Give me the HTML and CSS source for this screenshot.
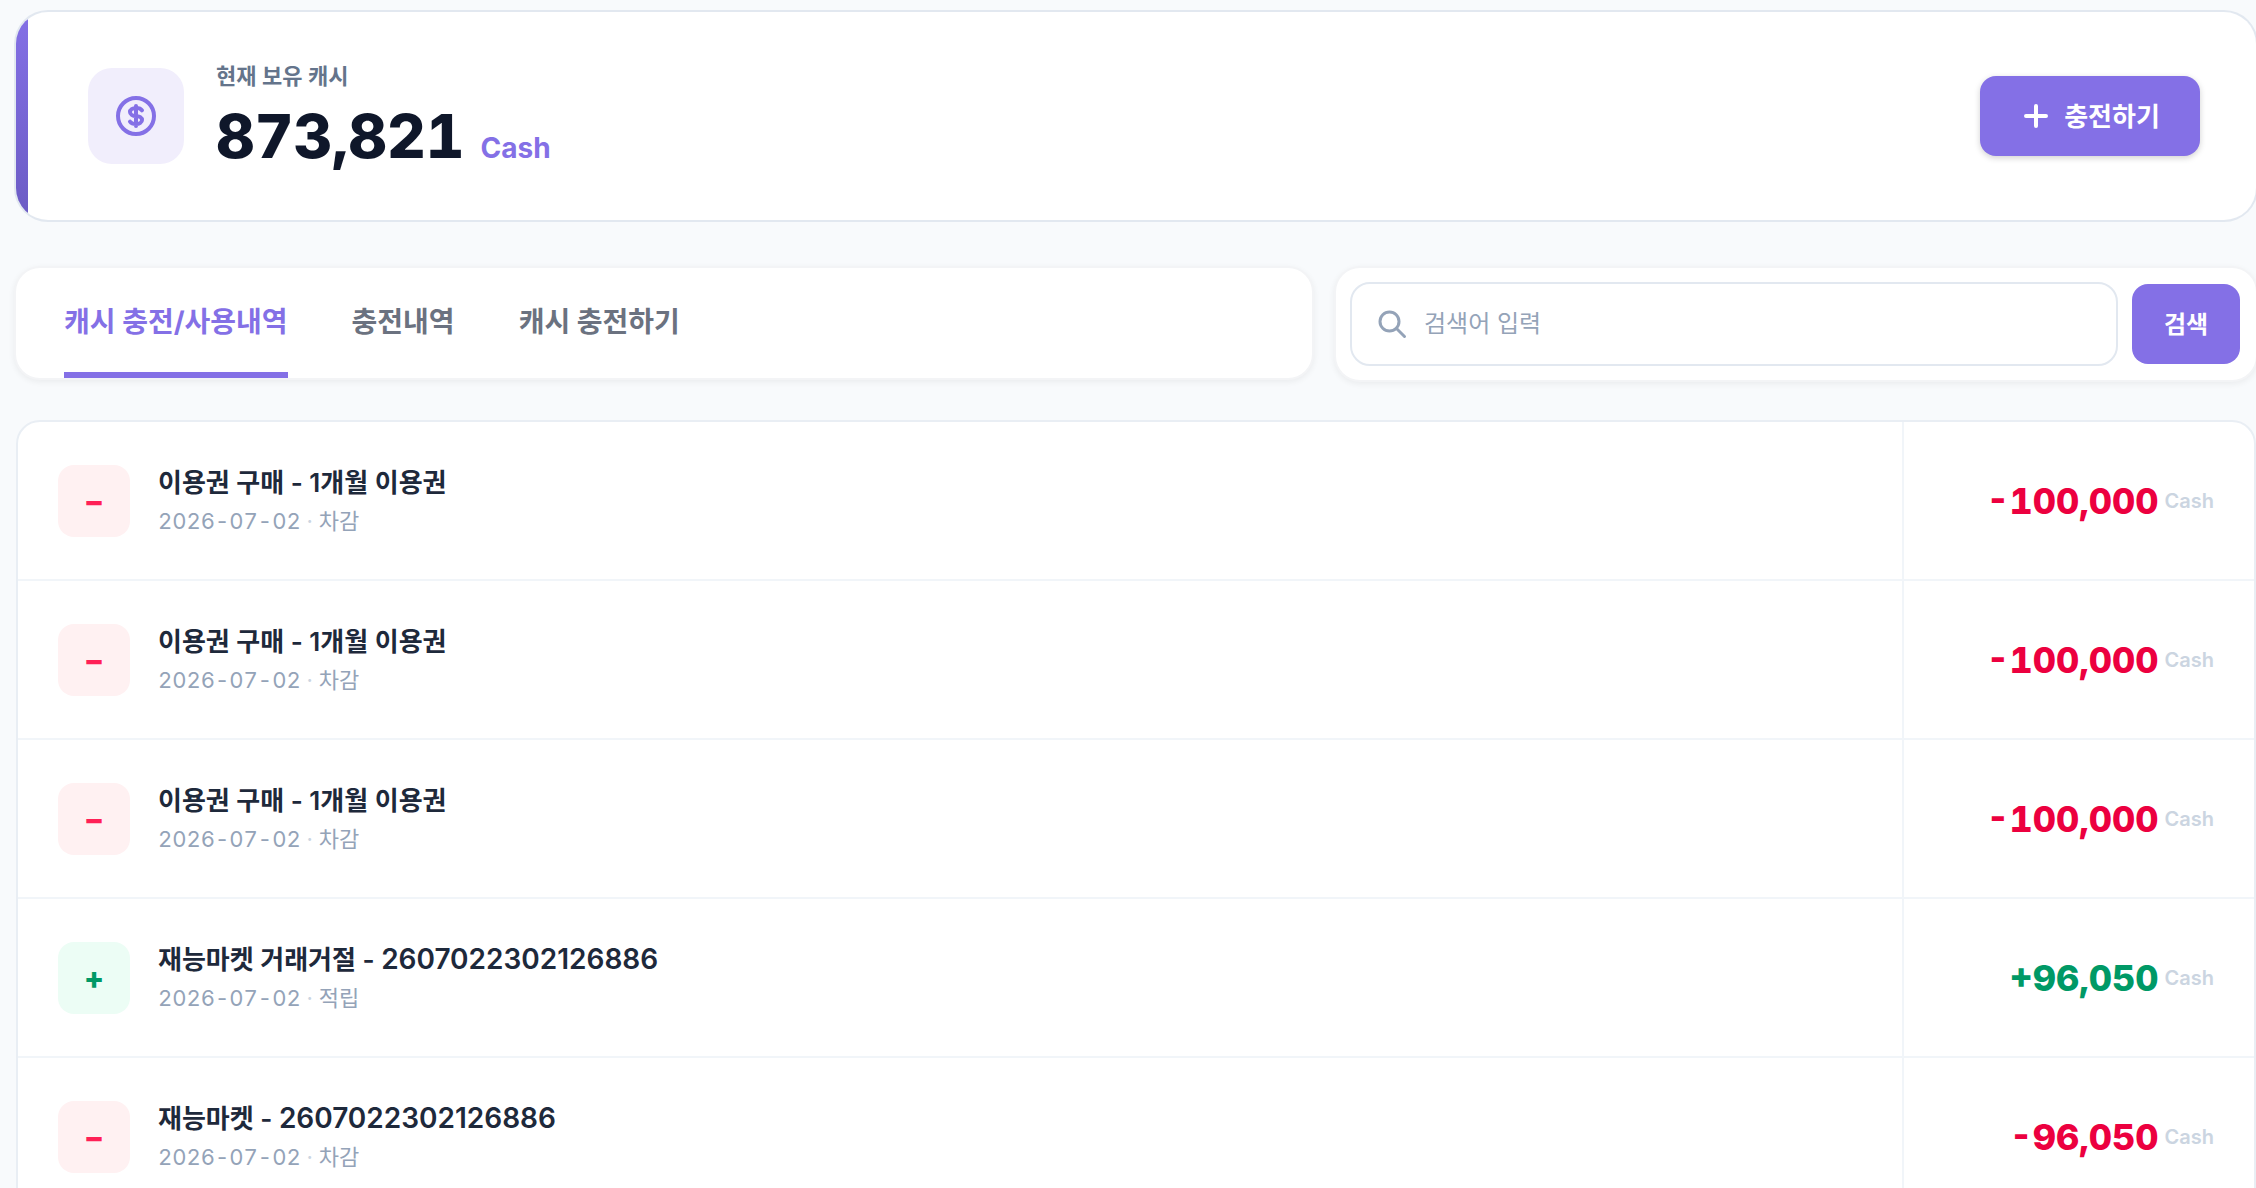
FILE: index.html
```html
<!DOCTYPE html>
<html lang="ko">
<head>
<meta charset="utf-8">
<meta name="viewport" content="width=device-width, initial-scale=1">
<title>캐시 충전/사용내역</title>
<link rel="stylesheet" href="styles.css">
</head>
<body>
<main class="page">
  <section class="balance">
    <div class="balance-icon">
      <svg width="48" height="48" viewBox="0 0 24 24" fill="none" stroke="currentColor" stroke-width="2" stroke-linecap="round" stroke-linejoin="round" aria-hidden="true"><circle cx="12" cy="12" r="9"/><path d="M15 9.200c-.5-.8-1.600-1.200-3-1.200-1.700 0-3 .9-3 2s1.300 2 3 2 3 .9 3 2-1.300 2-3 2c-1.400 0-2.500-.5-3-1.200M12 7v10"/></svg>
    </div>
    <div class="balance-info">
      <p class="balance-label">현재 보유 캐시</p>
      <p class="balance-value"><strong class="balance-number">873,821</strong><span class="balance-unit">Cash</span></p>
    </div>
    <button class="charge" type="button">
      <svg width="32" height="32" viewBox="0 0 32 32" fill="none" stroke="currentColor" stroke-width="4" stroke-linecap="round" aria-hidden="true"><path d="M16 6v20M6 16h20"/></svg>
      <span class="button-text">충전하기</span>
    </button>
  </section>

  <div class="toolbar">
    <nav class="tabs">
      <a class="tab tab-active" href="#history" aria-current="page">캐시 충전/사용내역</a>
      <a class="tab" href="#charges">충전내역</a>
      <a class="tab" href="#charge">캐시 충전하기</a>
    </nav>
    <form class="search">
      <label class="search-box">
        <svg width="32" height="32" viewBox="0 0 32 32" fill="none" stroke="currentColor" stroke-width="3" stroke-linecap="round" aria-hidden="true"><circle cx="13.500" cy="13.500" r="9.500"/><path d="M20.500 20.500l8 8"/></svg>
        <input class="search-input" type="search" placeholder="검색어 입력" aria-label="검색어 입력">
      </label>
      <button class="search-button" type="button"><span class="button-text">검색</span></button>
    </form>
  </div>

  <div class="list">
    <table class="history" aria-label="캐시 충전/사용내역">
      <tbody>
        <tr>
          <td class="entry"><div class="entry-row"><span class="sign sign-minus">−</span><div><p class="title">이용권 구매 - 1개월 이용권</p><p class="meta">2026-07-02 <span class="dot">·</span> 차감</p></div></div></td>
          <td class="amount"><div class="amount-row"><span class="value minus">-100,000</span><span class="unit">Cash</span></div></td>
        </tr>
        <tr>
          <td class="entry"><div class="entry-row"><span class="sign sign-minus">−</span><div><p class="title">이용권 구매 - 1개월 이용권</p><p class="meta">2026-07-02 <span class="dot">·</span> 차감</p></div></div></td>
          <td class="amount"><div class="amount-row"><span class="value minus">-100,000</span><span class="unit">Cash</span></div></td>
        </tr>
        <tr>
          <td class="entry"><div class="entry-row"><span class="sign sign-minus">−</span><div><p class="title">이용권 구매 - 1개월 이용권</p><p class="meta">2026-07-02 <span class="dot">·</span> 차감</p></div></div></td>
          <td class="amount"><div class="amount-row"><span class="value minus">-100,000</span><span class="unit">Cash</span></div></td>
        </tr>
        <tr>
          <td class="entry"><div class="entry-row"><span class="sign sign-plus">+</span><div><p class="title">재능마켓 거래거절 - <span class="code">2607022302126886</span></p><p class="meta">2026-07-02 <span class="dot">·</span> 적립</p></div></div></td>
          <td class="amount"><div class="amount-row"><span class="value plus">+96,050</span><span class="unit">Cash</span></div></td>
        </tr>
        <tr>
          <td class="entry"><div class="entry-row"><span class="sign sign-minus">−</span><div><p class="title">재능마켓 - <span class="code">2607022302126886</span></p><p class="meta">2026-07-02 <span class="dot">·</span> 차감</p></div></div></td>
          <td class="amount"><div class="amount-row"><span class="value minus">-96,050</span><span class="unit">Cash</span></div></td>
        </tr>
      </tbody>
    </table>
  </div>
</main>
</body>
</html>
```
FILE: styles.css
```css
:root {
  --purple: #8470e6;
  --line: #e2e8f0;
  --soft-line: #f1f5f9;
}

* {
  box-sizing: border-box;
}

body {
  margin: 0;
  background: #f8fafc;
  font-family: Inter, "Noto Sans CJK KR", sans-serif;
  color: #0f172a;
}

p {
  margin: 0;
}

button,
input {
  font-family: inherit;
}

svg {
  flex: none;
}

.page {
  padding: 12px 0 0 16px;
}

.balance {
  display: flex;
  align-items: center;
  gap: 32px;
  min-height: 208px;
  padding: 0 56px 0 72px;
  border-radius: 32px;
  background: linear-gradient(180deg, var(--purple), #6b5bc4) 0 0 / 12px 100% no-repeat #fff;
  box-shadow: 0 0 0 2px var(--line);
}

.balance-icon {
  display: grid;
  place-items: center;
  flex: none;
  width: 96px;
  height: 96px;
  border-radius: 24px;
  background: #f1eefc;
  color: var(--purple);
}

.balance-info {
  flex: 1;
}

.balance-label {
  font-size: 22px;
  line-height: 32px;
  font-weight: 600;
  color: #64748b;
}

.balance-value {
  display: flex;
  align-items: baseline;
  gap: 16px;
  margin-top: 20px;
  line-height: 48px;
}

.balance-number {
  font-size: 60px;
  font-weight: 800;
  font-variant-numeric: tabular-nums;
}

.balance-unit {
  font-size: 28px;
  font-weight: 700;
  color: var(--purple);
}

.charge {
  display: flex;
  align-items: center;
  justify-content: center;
  gap: 12px;
  width: 220px;
  height: 80px;
  border: 0;
  border-radius: 16px;
  background: var(--purple);
  box-shadow: 0 2px 6px rgba(0, 0, 0, 0.18);
  color: #fff;
  font-size: 26px;
  font-weight: 700;
}

.button-text {
  display: block;
  padding-bottom: 4px;
}

.toolbar {
  display: grid;
  grid-template-columns: 1296fr 920fr;
  align-items: start;
  gap: 24px;
  margin-top: 48px;
}

.tabs,
.search {
  border-radius: 24px;
  background: #fff;
  box-shadow: 0 0 0 2px #f3f4f6, 0 2px 6px 2px rgba(0, 0, 0, 0.06);
}

.tabs {
  display: flex;
  gap: 64px;
  height: 110px;
  padding: 0 48px;
}

.tab {
  display: flex;
  align-items: center;
  border-bottom: 6px solid transparent;
  color: #6b7280;
  font-size: 28px;
  font-weight: 700;
  text-decoration: none;
}

.tab-active {
  border-bottom-color: var(--purple);
  color: var(--purple);
}

.search {
  display: flex;
  align-items: center;
  gap: 14px;
  height: 112px;
  padding: 14px 16px 14px 14px;
}

.search-box {
  display: flex;
  flex: 1;
  align-items: center;
  gap: 16px;
  height: 84px;
  padding: 0 24px;
  border: 2px solid var(--line);
  border-radius: 20px;
  color: #94a3b8;
}

.search-input {
  flex: 1;
  min-width: 0;
  padding: 0 0 2px;
  border: 0;
  outline: 0;
  background: none;
  font-size: 24px;
}

.search-input::placeholder {
  color: #94a3b8;
}

.search-button {
  width: 108px;
  height: 80px;
  border: 0;
  border-radius: 16px;
  background: var(--purple);
  color: #fff;
  font-size: 24px;
  font-weight: 700;
}

.list {
  margin-top: 40px;
  border: 2px solid #e9eef4;
  border-radius: 24px;
  background: #fff;
}

.history {
  width: 100%;
  border-spacing: 0;
}

.history td {
  height: 159px;
  padding: 0 40px;
}

.history tr:first-child td {
  height: 157px;
}

.history tr + tr td {
  border-top: 2px solid var(--soft-line);
}

.history .amount {
  width: 352px;
  border-left: 2px solid var(--soft-line);
}

.entry-row {
  display: flex;
  align-items: center;
  gap: 28px;
}

.sign {
  display: grid;
  place-items: center;
  flex: none;
  width: 72px;
  height: 72px;
  border-radius: 16px;
  font-size: 30px;
  line-height: 32px;
  font-weight: 800;
}

.sign-minus {
  background: #fff1f2;
  color: #ff2056;
}

.sign-plus {
  background: #ecfdf5;
  color: #009966;
}

.title {
  color: #1e293b;
  font-size: 26px;
  line-height: 40px;
  font-weight: 600;
}

.code {
  font-size: 28px;
}

.meta {
  color: #94a3b8;
  font-size: 22px;
  line-height: 36px;
  font-variant-numeric: tabular-nums;
}

.dot {
  color: #cbd5e1;
}

.amount-row {
  display: flex;
  align-items: center;
  justify-content: flex-end;
  gap: 6px;
}

.value {
  font-size: 36px;
  font-weight: 800;
  font-variant-numeric: tabular-nums;
}

.minus {
  color: #ec003f;
}

.plus {
  color: #009966;
}

.unit {
  color: #cbd5e1;
  font-size: 20px;
  font-weight: 600;
}
```
